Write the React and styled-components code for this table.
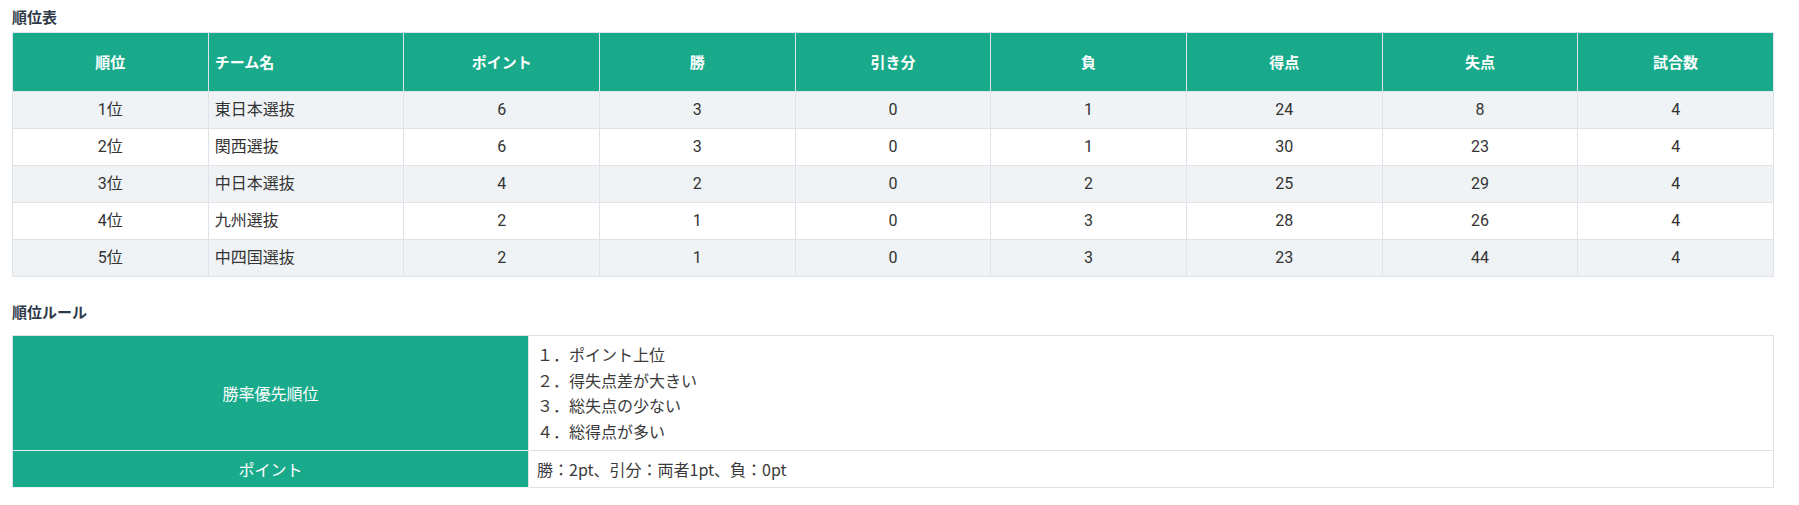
import React from "react";
import styled, { createGlobalStyle } from "styled-components";

const GlobalStyle = createGlobalStyle`
  html, body { margin: 0; padding: 0; background: #ffffff; }
  body { font-family: "Noto Sans CJK JP", "Noto Sans", sans-serif; color: #333; }
`;

const Page = styled.div`
  padding: 0 25px 0 12px;
`;

const Title = styled.h3`
  margin: ${(p) => p.$top}px 0 ${(p) => p.$bottom}px;
  font-size: 15px;
  line-height: 22px;
  font-weight: 700;
  color: #2f3a48;
  font-family: "Noto Sans CJK JP", sans-serif;
`;

const Table = styled.table`
  width: 100%;
  border-collapse: collapse;
  table-layout: fixed;
  font-family: Roboto, "Noto Sans CJK JP", sans-serif;
  font-size: 16px;
  color: #333;
`;

const HeadCell = styled.th`
  background: #18aa8a;
  color: #ffffff;
  font-weight: 700;
  font-size: 15px;
  font-family: "Noto Sans CJK JP", sans-serif;
  line-height: 24px;
  padding: 17px 6px;
  border: 1px solid #dfe5e8;
  text-align: ${(p) => p.$align || "center"};
`;

const Row = styled.tr`
  background: ${(p) => (p.$striped ? "#f0f3f6" : "#ffffff")};
`;

const Cell = styled.td`
  padding: 6px 6px;
  line-height: 24px;
  border: 1px solid #dfe3e7;
  text-align: ${(p) => p.$align || "center"};
`;

const RuleTable = styled.table`
  width: 100%;
  border-collapse: collapse;
  table-layout: fixed;
  font-family: "Noto Sans CJK JP", sans-serif;
  font-size: 16px;
  color: #3a3a3a;
`;

const RuleHead = styled.th`
  width: 499px;
  background: #18aa8a;
  color: #ffffff;
  font-weight: 400;
  padding: 6px 8px;
  line-height: 24px;
  border: 1px solid #dfe3e7;
  border-bottom-color: #e6f5f1;
  text-align: center;
`;

const RuleCell = styled.td`
  padding: 6px 8px;
  line-height: 24px;
  border: 1px solid #dfe3e7;
  text-align: left;
  background: #ffffff;
`;

const RuleLine = styled.div`
  line-height: 25.6px;
`;

const headers = ["順位", "チーム名", "ポイント", "勝", "引き分", "負", "得点", "失点", "試合数"];

const rows = [
  ["1位", "東日本選抜", 6, 3, 0, 1, 24, 8, 4],
  ["2位", "関西選抜", 6, 3, 0, 1, 30, 23, 4],
  ["3位", "中日本選抜", 4, 2, 0, 2, 25, 29, 4],
  ["4位", "九州選抜", 2, 1, 0, 3, 28, 26, 4],
  ["5位", "中四国選抜", 2, 1, 0, 3, 23, 44, 4],
];

const rules = ["１．ポイント上位", "２．得失点差が大きい", "３．総失点の少ない", "４．総得点が多い"];

export default function App() {
  return (
    <Page>
      <GlobalStyle />
      <Title $top={6} $bottom={4}>順位表</Title>
      <Table>
        <thead>
          <tr>
            {headers.map((h, i) => (
              <HeadCell key={h} $align={i === 1 ? "left" : "center"}>
                {h}
              </HeadCell>
            ))}
          </tr>
        </thead>
        <tbody>
          {rows.map((r, ri) => (
            <Row key={r[0]} $striped={ri % 2 === 0}>
              {r.map((c, ci) => (
                <Cell key={ci} $align={ci === 1 ? "left" : "center"}>
                  {c}
                </Cell>
              ))}
            </Row>
          ))}
        </tbody>
      </Table>
      <Title $top={24} $bottom={12}>順位ルール</Title>
      <RuleTable>
        <tbody>
          <tr>
            <RuleHead>勝率優先順位</RuleHead>
            <RuleCell>
              {rules.map((t) => (
                <RuleLine key={t}>{t}</RuleLine>
              ))}
            </RuleCell>
          </tr>
          <tr>
            <RuleHead>ポイント</RuleHead>
            <RuleCell>勝：2pt、引分：両者1pt、負：0pt</RuleCell>
          </tr>
        </tbody>
      </RuleTable>
    </Page>
  );
}
